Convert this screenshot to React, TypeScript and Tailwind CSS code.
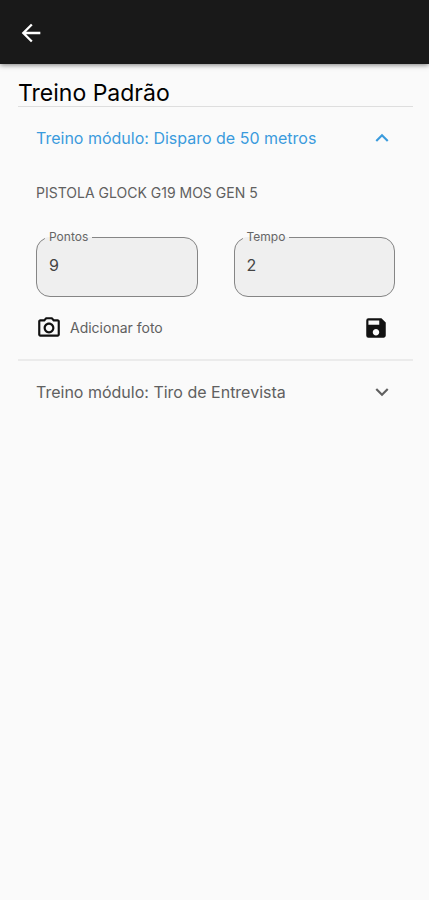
import { useState, type ReactNode } from 'react';
import { MdArrowBack, MdExpandLess, MdExpandMore, MdOutlinePhotoCamera, MdSave } from 'react-icons/md';

type FieldProps = {
    id: string;
    label: string;
    initial: string;
};

// Outlined input with the label sitting in the border notch
const OutlinedField = ({ id, label, initial }: FieldProps) => {
    const [value, setValue] = useState(initial);

    return (
        <fieldset className="h-[68px] min-w-0 flex-1 rounded-[14px] border border-[#858585] bg-[#efefef] pl-2">
            <legend className="pr-1 pl-1 text-xs leading-4 text-[#666]">
                <label htmlFor={id}>{label}</label>
            </legend>
            <input
                id={id}
                value={value}
                inputMode="numeric"
                onChange={(e) => setValue(e.target.value)}
                className="h-10 w-full bg-transparent px-1 text-base text-[#444] outline-none"
            />
        </fieldset>
    );
};

type ModuleProps = {
    title: string;
    open: boolean;
    onToggle: () => void;
    children?: ReactNode;
};

const TrainingModule = ({ title, open, onToggle, children }: ModuleProps) => (
    <section>
        <button
            type="button"
            aria-expanded={open}
            onClick={onToggle}
            className={`flex h-[62px] w-full items-center justify-between px-[18px] text-left text-base ${
                open ? 'text-[#3a9bdd]' : 'text-[#606060]'
            }`}
        >
            <span>{title}</span>
            {open ? <MdExpandLess size={26} /> : <MdExpandMore size={26} />}
        </button>
        {open && children}
    </section>
);

export default function App() {
    const [openModule, setOpenModule] = useState<string | null>('disparo');
    const toggle = (id: string) => setOpenModule(openModule === id ? null : id);

    return (
        <div className="min-h-screen bg-[#fafafa] font-['Inter',sans-serif] font-normal">
            <header className="flex h-16 items-center bg-[#191919] px-[17px] pt-[2px] shadow-[0_1px_5px_rgba(0,0,0,0.5)]">
                <button type="button" aria-label="Voltar" className="text-white">
                    <MdArrowBack size={28} />
                </button>
            </header>

            <main className="pt-4 pr-4 pl-[18px]">
                <h1 className="border-b border-[#dedede] text-[23px] leading-[26px] text-black">
                    Treino Padrão
                </h1>

                <TrainingModule
                    title="Treino módulo: Disparo de 50 metros"
                    open={openModule === 'disparo'}
                    onToggle={() => toggle('disparo')}
                >
                    <div className="px-[18px] pt-[14px] pb-[18px]">
                        <p className="text-sm leading-5 text-[#606060]">PISTOLA GLOCK G19 MOS GEN 5</p>
                        <div className="mt-[26px] flex gap-9">
                            <OutlinedField id="pontos" label="Pontos" initial="9" />
                            <OutlinedField id="tempo" label="Tempo" initial="2" />
                        </div>
                        <div className="mt-[18px] flex items-center justify-between pr-[6px]">
                            <button type="button" className="flex items-center gap-2 text-sm text-[#606060]">
                                <MdOutlinePhotoCamera size={26} className="text-[#111]" />
                                Adicionar foto
                            </button>
                            <button type="button" aria-label="Salvar" className="text-[#111]">
                                <MdSave size={26} />
                            </button>
                        </div>
                    </div>
                </TrainingModule>

                <hr className="border-t-2 border-[#ebebeb]" />

                <TrainingModule
                    title="Treino módulo: Tiro de Entrevista"
                    open={openModule === 'entrevista'}
                    onToggle={() => toggle('entrevista')}
                />
            </main>
        </div>
    );
}
